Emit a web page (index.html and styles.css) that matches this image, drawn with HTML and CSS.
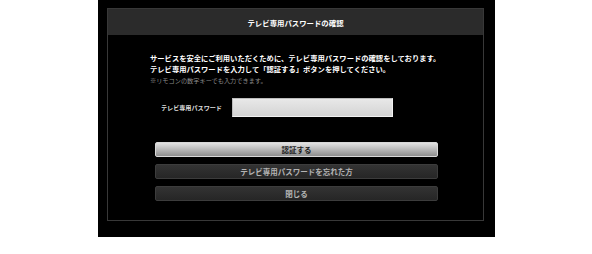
FILE: index.html
```html
<!DOCTYPE html>
<html lang="ja">
<head>
<meta charset="utf-8">
<link rel="stylesheet" href="styles.css">
</head>
<body>
<div class="screen">
  <div class="panel">
    <div class="header">テレビ専用パスワードの確認</div>
    <div class="content">
      <p class="msg">サービスを安全にご利用いただくために、テレビ専用パスワードの確認をしております。</p>
      <p class="msg">テレビ専用パスワードを入力して「認証する」ボタンを押してください。</p>
      <p class="note">※リモコンの数字キーでも入力できます。</p>
      <div class="form-row">
        <label class="label">テレビ専用パスワード</label>
        <div class="input"></div>
      </div>
      <div class="buttons">
        <div class="btn btn-primary">認証する</div>
        <div class="btn btn-dark">テレビ専用パスワードを忘れた方</div>
        <div class="btn btn-dark">閉じる</div>
      </div>
    </div>
  </div>
</div>
</body>
</html>
```

FILE: styles.css
```css
html, body {
  margin: 0;
  padding: 0;
  background: #ffffff;
}
body {
  font-family: "Noto Sans CJK JP", "Noto Sans", sans-serif;
}
.screen {
  margin-left: 98px;
  width: 397px;
  height: 237px;
  background: #000;
  padding: 8px 0 0 9px;
  box-sizing: border-box;
}
.panel {
  width: 377px;
  height: 213px;
  border: 1px solid #383838;
  box-sizing: border-box;
}
.header {
  height: 26px;
  background: #2b2b2b;
  color: #fff;
  font-size: 7.4px;
  font-weight: 700;
  display: flex;
  align-items: center;
  justify-content: center;
}
.content {
  padding: 18px 0 0 42px;
}
.msg, .note {
  margin: 0;
  line-height: 11px;
  font-size: 7.3px;
  color: #fff;
  font-weight: 700;
  white-space: nowrap;
}
.note {
  font-size: 6.2px;
  font-weight: 400;
  color: #8c8c8c;
}
.form-row {
  display: flex;
  align-items: center;
  margin-top: 12px;
  padding-left: 11px;
}
.label {
  font-size: 6.1px;
  font-weight: 700;
  color: #dcdcdc;
  width: 71px;
}
.input {
  width: 161px;
  height: 19px;
  box-sizing: border-box;
  border: 1px solid #bdbdbd;
  border-right-color: #f2f2f2;
  border-bottom-color: #f2f2f2;
  background: linear-gradient(#e8e8e8, #d4d4d4);
}
.buttons {
  display: flex;
  flex-direction: column;
  gap: 7px;
  margin-top: 25px;
  margin-left: 5px;
  width: 283px;
}
.btn {
  height: 15px;
  box-sizing: border-box;
  border-radius: 2px;
  display: flex;
  align-items: center;
  justify-content: center;
  font-size: 7.5px;
  font-weight: 700;
}
.btn-primary {
  background: linear-gradient(#e2e2e2, #b8b8b8 50%, #8e8e8e);
  border: 1px solid #d8d8d8;
  color: #1c1c1c;
}
.btn-dark {
  background: linear-gradient(#333, #262626);
  border: 1px solid #3c3c3c;
  color: #b4b4b4;
}
```
